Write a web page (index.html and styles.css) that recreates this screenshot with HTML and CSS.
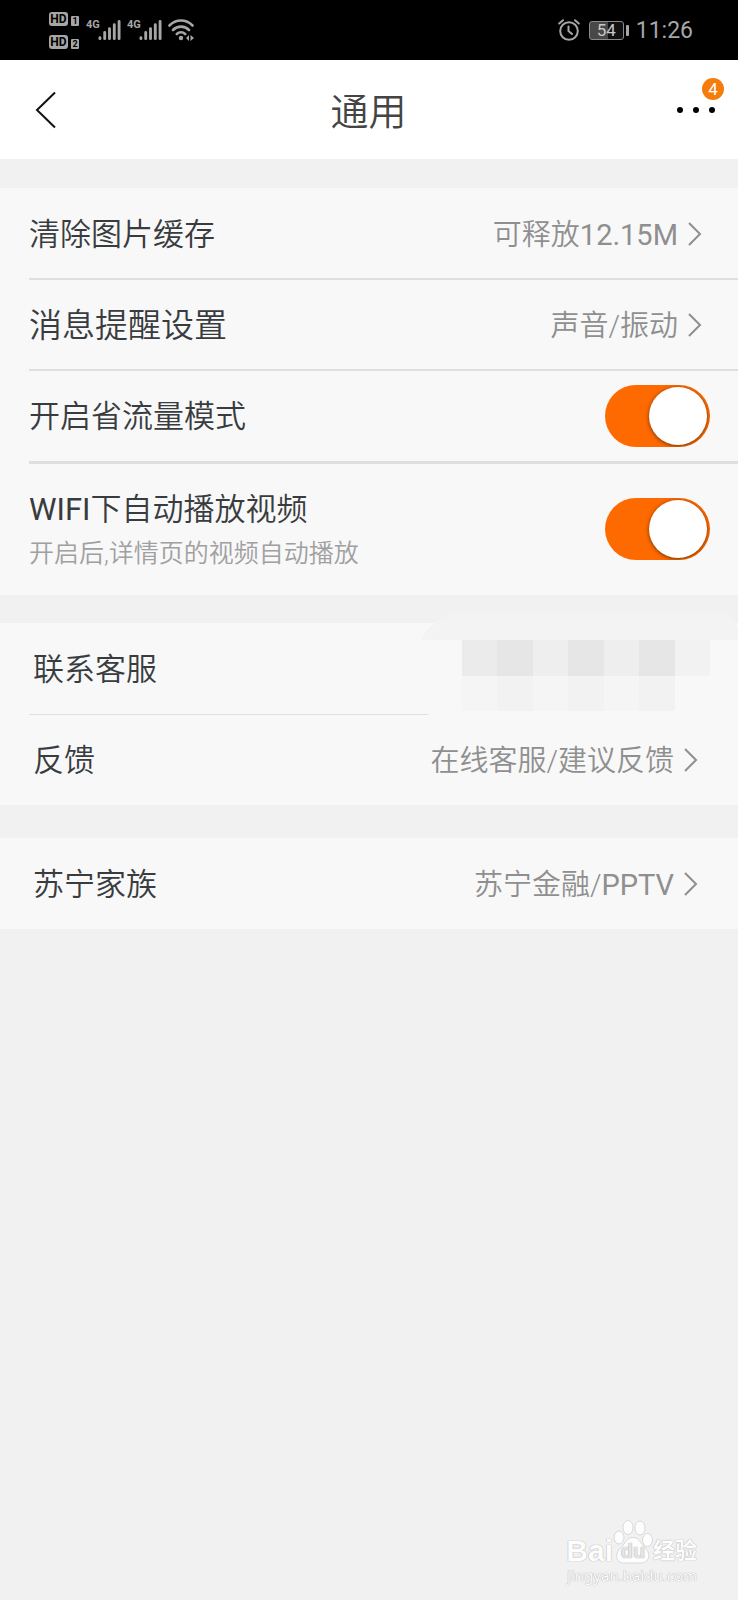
FILE: index.html
```html
<!DOCTYPE html>
<html lang="zh-CN">
<head>
<meta charset="utf-8">
<meta name="viewport" content="width=device-width, initial-scale=1">
<title>通用</title>
<link rel="stylesheet" href="styles.css">
</head>
<body>
<svg class="defs" aria-hidden="true">
  <symbol id="chevron" viewBox="0 0 14 24"><path d="M1 1 12 12 1 23" fill="none" stroke="currentColor" stroke-width="2"/></symbol>
  <symbol id="signal" viewBox="0 0 24 22"><path d="M2 19v1M7 13.500v6.500M12 9.500v10.500M17 5.500v14.500M22 2v18" fill="none" stroke="currentColor" stroke-width="3" stroke-linecap="round"/></symbol>
</svg>
<div class="status">
  <div class="hd">
    <div class="hd-line"><span class="hd-tag">HD</span><span class="hd-sim">1</span></div>
    <div class="hd-line"><span class="hd-tag">HD</span><span class="hd-sim">2</span></div>
  </div>
  <div class="cell"><span class="net">4G</span><svg class="signal"><use href="#signal"/></svg></div>
  <div class="cell"><span class="net">4G</span><svg class="signal"><use href="#signal"/></svg></div>
  <svg class="wifi" viewBox="0 0 26 22" fill="none" stroke="currentColor" stroke-width="2.600" stroke-linecap="round">
    <path d="M1.500 6.500C8-.2 18-.2 24.500 6.500M5 11c4.500-4.500 11.500-4.500 16 0M8.800 15c2.500-2.200 5.900-2.200 8.400 0"/>
    <circle cx="13" cy="19" r="2.200" fill="currentColor" stroke="none"/>
    <path d="M21 16v6l-3-3zM22.500 16v6l3.500-3z" fill="currentColor" stroke="none"/>
  </svg>
  <div class="status-right">
    <svg class="alarm" viewBox="0 0 22 22" fill="none" stroke="currentColor" stroke-width="2" stroke-linecap="round">
      <circle cx="11" cy="12" r="8.800"/><path d="M10.500 7.500V12l3.500 3M1.200 4.500 5 1.200M20.800 4.500 17 1.200"/>
    </svg>
    <span class="battery"><span class="battery-body">54</span><span class="battery-cap"></span></span>
    <span class="clock">11:26</span>
  </div>
</div>

<header class="header">
  <button class="icon-button" aria-label="返回"><svg class="back" viewBox="0 0 22 38"><path d="M20 1.500 2 19 20 36.500" fill="none" stroke="currentColor" stroke-width="2"/></svg></button>
  <h1 class="title">通用</h1>
  <button class="icon-button more" aria-label="更多"><span class="dot"></span><span class="dot"></span><span class="dot"></span><span class="badge">4</span></button>
</header>

<main class="settings">
  <section class="group">
    <button class="row"><span class="label">清除图片缓存</span><span class="value">可释放<span class="latin">12.15M</span></span><svg class="chevron"><use href="#chevron"/></svg></button>
    <button class="row"><span class="label label-large">消息提醒设置</span><span class="value">声音/振动</span><svg class="chevron"><use href="#chevron"/></svg></button>
    <div class="row"><label class="label" for="saver">开启省流量模式</label><input class="switch" id="saver" type="checkbox" role="switch" checked></div>
    <div class="row row-tall"><div class="stack"><label class="label" for="autoplay"><span class="latin">WIFI</span>下自动播放视频</label><span class="hint">开启后,详情页的视频自动播放</span></div><input class="switch" id="autoplay" type="checkbox" role="switch" checked></div>
  </section>
  <section class="group group-inset">
    <div class="row"><span class="label">联系客服</span>
      <div class="mask" aria-hidden="true"><div class="mosaic">
        <i class="m3"></i><i class="m4"></i><i class="m2"></i><i class="m4"></i><i class="m2"></i><i class="m4"></i><i class="m1"></i>
        <i></i><i class="m1"></i><i></i><i class="m1"></i><i></i><i class="m1"></i><i class="m0"></i>
      </div></div>
    </div>
    <button class="row"><span class="label">反馈</span><span class="value">在线客服/建议反馈</span><svg class="chevron"><use href="#chevron"/></svg></button>
  </section>
  <section class="group group-inset group-last">
    <button class="row"><span class="label">苏宁家族</span><span class="value">苏宁金融/<span class="latin">PPTV</span></span><svg class="chevron"><use href="#chevron"/></svg></button>
  </section>
</main>

<footer class="watermark">
  <div class="brand">
    <span>Bai</span>
    <span class="paw"><svg viewBox="0 0 40 44" fill="#fdfdfd" stroke="#d8d8d8" stroke-width="1">
      <ellipse cx="6" cy="17.500" rx="5" ry="6.500"/><ellipse cx="15" cy="7.500" rx="5" ry="7"/><ellipse cx="27" cy="8" rx="5" ry="7"/><ellipse cx="34.500" cy="20" rx="5" ry="6.500"/>
      <path d="M20 17.500c6 0 7.500 5.500 12 10 7 7 3.500 15.500-4 15.500H11C3 43 1 34 8 27.500c4.500-4.500 6-10 12-10z"/>
    </svg><span class="du">du</span></span>
    <span class="jingyan">经验</span>
  </div>
  <div class="site">jingyan.baidu.com</div>
</footer>
</body>
</html>
```
FILE: styles.css
```css
* { box-sizing: border-box; }

body {
  margin: 0;
  min-height: 100vh;
  display: flex;
  flex-direction: column;
  background: #f1f1f1;
  color: #383c3f;
  font-family: Roboto, "Noto Sans CJK SC", sans-serif;
  font-weight: 350;
}

button {
  border: 0;
  padding: 0;
  background: none;
  color: inherit;
  font: inherit;
  text-align: left;
}

.defs { position: absolute; width: 0; height: 0; }
.latin { font-weight: 400; }

/* Status bar */
.status {
  height: 60px;
  padding: 0 45px 0 49px;
  display: flex;
  align-items: center;
  background: #000;
  color: #a6a6a6;
}
.hd { display: flex; flex-direction: column; gap: 9px; margin-right: 7px; }
.hd-line { display: flex; align-items: flex-end; gap: 3px; }
.hd-tag, .hd-sim {
  border-radius: 3px;
  background: #a6a6a6;
  color: #000;
  text-align: center;
  font-weight: 700;
}
.hd-tag { width: 19px; height: 14px; font-size: 12px; line-height: 14px; }
.hd-sim { width: 8px; height: 10px; border-radius: 1px; font-size: 9px; line-height: 10px; }
.cell { display: flex; align-items: flex-start; margin-right: 6px; }
.net { width: 12px; font: 700 11px/12px Roboto, sans-serif; }
.signal { width: 23px; height: 22px; }
.wifi { width: 26px; height: 22px; }
.status-right { margin-left: auto; display: flex; align-items: center; }
.alarm { width: 22px; height: 22px; margin-right: 9px; }
.battery { display: flex; align-items: center; gap: 2px; margin-right: 7px; }
.battery-body {
  width: 35px;
  height: 19px;
  border: 1px solid #8a8a8a;
  border-radius: 3px;
  background: linear-gradient(90deg, #484848 54%, #111 54%);
  color: #c8c8c8;
  font-size: 17px;
  font-weight: 400;
  line-height: 17px;
  text-align: center;
}
.battery-cap { width: 3px; height: 11px; border-radius: 1px; background: #a6a6a6; }
.clock { padding-top: 2px; font-size: 23px; line-height: 30px; font-weight: 400; }

/* Title bar */
.header {
  height: 99px;
  padding: 0 20px 0 34px;
  display: grid;
  grid-template-columns: 1fr auto 1fr;
  align-items: center;
  background: #fff;
}
.icon-button { display: flex; align-items: center; height: 60px; color: #111; }
.back { width: 24px; height: 38px; }
.title { margin: 0; padding: 4px 15px 0 0; color: #444; font-size: 38px; line-height: 48px; font-weight: 350; }
.more { position: relative; justify-self: end; gap: 10px; padding-right: 3px; }
.dot { width: 6px; height: 6px; border-radius: 50%; background: #000; }
.badge {
  position: absolute;
  right: -6px;
  top: -2px;
  width: 22px;
  height: 22px;
  border-radius: 50%;
  background: #f57c0a;
  color: #fff;
  font-size: 17px;
  font-weight: 400;
  line-height: 22px;
  text-align: center;
}

/* Settings list */
.settings { padding-top: 29px; display: flex; flex-direction: column; gap: 28px; }
.group { background: #f8f8f8; }
.group-last { margin-top: 5px; }
.row {
  position: relative;
  width: 100%;
  min-height: 91px;
  padding: 0 36px 0 29px;
  display: flex;
  align-items: center;
}
.row + .row::before {
  content: "";
  position: absolute;
  left: 29px;
  right: 0;
  top: -1px;
  height: 2px;
  background: #dfdfdf;
}
.row + .row-tall::before { top: 0; height: 3px; }
.group-inset .row { padding: 0 40px 0 33px; }
.group-inset .row + .row::before { height: 1px; top: 0; }
.row-tall { min-height: 134px; padding-top: 2px; }
.label, .value { padding-top: 2px; }
.label { font-size: 31px; line-height: 40px; }
.label-large { font-size: 33px; }
.stack { display: flex; flex-direction: column; gap: 6px; }
.hint { padding-top: 2px; color: #a0a0a0; font-size: 25px; line-height: 32px; }
.value { margin-left: auto; color: #8f8f8f; font-size: 29px; line-height: 40px; }
.chevron { width: 14px; height: 24px; margin-left: 10px; color: #8f8f8f; }

.switch {
  appearance: none;
  width: 105px;
  height: 62px;
  margin: 0 -8px 0 auto;
  padding: 2px 3px 2px 2px;
  display: flex;
  justify-content: flex-start;
  border-radius: 31px;
  background: #ccc;
  overflow: hidden;
}
.switch::before {
  content: "";
  width: 58px;
  height: 58px;
  border-radius: 50%;
  background: #fff;
  box-shadow: 0 1px 4px rgba(60, 30, 0, 0.7);
}
.switch:checked { justify-content: flex-end; background: #ff6a00; }

/* Pixelated cover over the phone number */
.mask {
  position: absolute;
  z-index: 1;
  right: 0;
  top: -10px;
  width: 322px;
  height: 118px;
  padding: 27px 28px 20px 46px;
  border-radius: 48px 20px 0 48px;
  background: linear-gradient(#f3f3f3 27px, #f8f8f8 27px);
}
.mosaic { display: grid; height: 71px; grid-template-columns: repeat(7, 1fr); grid-template-rows: 1fr 1fr; }
.mosaic i { background: #f5f5f5; }
.mosaic .m0 { background: #f8f8f8; }
.mosaic .m1 { background: #f2f2f2; }
.mosaic .m2 { background: #eee; }
.mosaic .m3 { background: #ebebeb; }
.mosaic .m4 { background: #e6e6e6; }

/* Watermark */
.watermark {
  margin-top: auto;
  padding: 0 41px 14px;
  display: flex;
  flex-direction: column;
  align-items: flex-end;
  color: #fdfdfd;
  font-family: "Liberation Sans", "Noto Sans CJK SC", sans-serif;
  text-shadow: 0 0 1px #aaa, 0 0 1px #bbb;
}
.brand { display: flex; align-items: flex-end; font-size: 30px; line-height: 26px; font-weight: 700; }
.paw { position: relative; width: 40px; height: 44px; }
.paw svg { display: block; width: 40px; height: 44px; }
.du { position: absolute; left: 0; right: 0; bottom: 2px; color: #e6e6e6; font-size: 20px; line-height: 22px; text-align: center; }
.jingyan { font-size: 22px; }
.site { font: 400 15px/22px "Noto Sans", sans-serif; }
```
